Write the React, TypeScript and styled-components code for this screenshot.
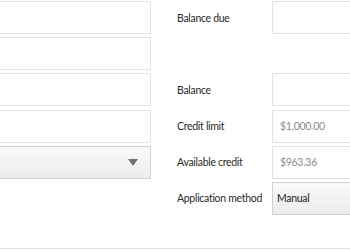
import React from "react";
import styled, { createGlobalStyle } from "styled-components";

const Global = createGlobalStyle`
  html, body {
    margin: 0;
    padding: 0;
    background: #ffffff;
    overflow: hidden;
  }
  body {
    font-family: Lato, "Noto Sans", sans-serif;
    font-size: 10.5px;
    letter-spacing: -0.3px;
    color: #333333;
  }
`;

const Page = styled.div`
  width: 350px;
  height: 250px;
  overflow: hidden;
  position: relative;
  display: flex;
  flex-direction: column;
`;

const Columns = styled.div`
  display: flex;
  padding-top: 1px;
  margin-left: -20px;
  gap: 26px;
  flex: 1;
`;

const LeftCol = styled.div`
  width: 171px;
  display: flex;
  flex-direction: column;
  gap: 3.2px;
`;

const RightCol = styled.div`
  flex: 1;
  display: grid;
  grid-template-columns: 95px 1fr;
  grid-auto-rows: 33px;
  row-gap: 3.2px;
  margin-right: -20px;
`;

const Field = styled.div<{ $disabled?: boolean }>`
  box-sizing: border-box;
  height: 33px;
  border: 1px solid #e3e3e3;
  background: #ffffff;
  display: flex;
  align-items: center;
  padding: 0 7px;
  color: ${(p) => (p.$disabled ? "#8c8c8c" : "#333333")};
`;

const Select = styled.div`
  box-sizing: border-box;
  height: 33px;
  border: 1px solid #d2d2d2;
  background: linear-gradient(#fafafa, #ececec);
  display: flex;
  align-items: center;
  justify-content: space-between;
  padding: 0 12px 0 4px;
  color: #222222;
`;

const Arrow = styled.span`
  width: 0;
  height: 0;
  border-left: 5px solid transparent;
  border-right: 5px solid transparent;
  border-top: 7px solid #707070;
`;

const Label = styled.div`
  display: flex;
  align-items: center;
  white-space: nowrap;
  color: #2a2a2a;
`;

const Blank = styled.div``;

const Footer = styled.div`
  height: 1px;
  background: #e0e0e0;
  margin-bottom: 1px;
`;

export default function App() {
  return (
    <Page>
      <Global />
      <Columns>
        <LeftCol>
          <Field />
          <Field />
          <Field />
          <Field />
          <Select>
            <span />
            <Arrow />
          </Select>
        </LeftCol>
        <RightCol>
          <Label>Balance due</Label>
          <Field />
          <Blank />
          <Blank />
          <Label>Balance</Label>
          <Field />
          <Label>Credit limit</Label>
          <Field $disabled>$1,000.00</Field>
          <Label>Available credit</Label>
          <Field $disabled>$963.36</Field>
          <Label>Application method</Label>
          <Select>Manual</Select>
        </RightCol>
      </Columns>
      <Footer />
    </Page>
  );
}
